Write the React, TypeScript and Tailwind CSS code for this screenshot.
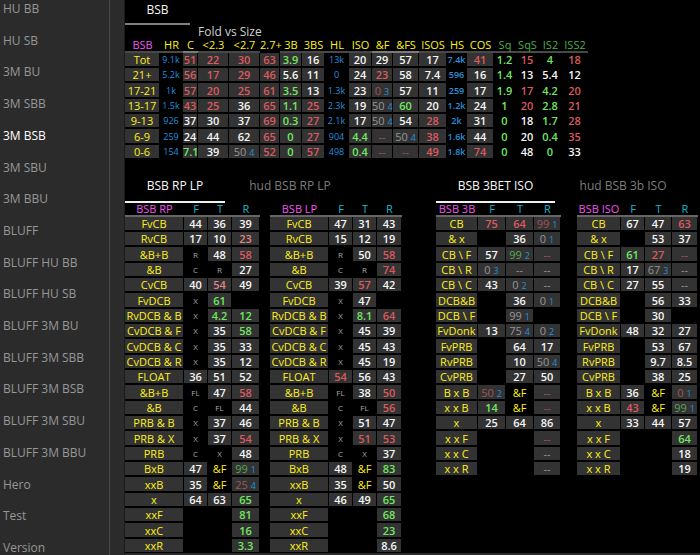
import { clsx } from 'clsx';

const pages = [
  'HU BB', 'HU SB', '3M BU', '3M SBB', '3M BSB', '3M SBU', '3M BBU', 'BLUFF', 'BLUFF HU BB',
  'BLUFF HU SB', 'BLUFF 3M BU', 'BLUFF 3M SBB', 'BLUFF 3M BSB', 'BLUFF 3M SBU', 'BLUFF 3M BBU',
  'Hero', 'Test', 'Version',
];

// Cell notation: optional tone letter, value, optional "/sample size". "_" is an empty cell.
const tones: Record<string, string> = {
  r: 'text-[#dc5a5e]',
  p: 'text-[#e08486]',
  g: 'text-[#72e862]',
  d: 'text-[#969696] font-normal',
  e: 'text-[#a05658] font-normal',
  h: 'text-[#58a854] font-normal',
};

type Column = {
  name: string;
  width: string;
  head?: string;
  line?: string;
  kind?: 'hands' | 'total' | 'bare';
};

const sizeColumns: Column[] = [
  { name: 'BSB', width: 'w-[35px]', head: 'text-[#f255f2]' },
  { name: 'HR', width: 'w-[23px]', kind: 'hands' },
  { name: 'C', width: 'w-[15px]', line: 'border-b-[#7a7a7a]' },
  { name: '<2.3', width: 'w-[31px]' },
  { name: '<2.7', width: 'w-[31px]' },
  { name: '2.7+', width: 'w-[20px]', line: 'border-b-black' },
  { name: '3B', width: 'w-[22px]' },
  { name: '3BS', width: 'w-[23px]' },
  { name: 'HL', width: 'w-[24px]', kind: 'hands' },
  { name: 'ISO', width: 'w-[23px]' },
  { name: '&F', width: 'w-[21px]', line: 'border-b-[#7a7a7a]' },
  { name: '&FS', width: 'w-[26px]', line: 'border-b-[#7a7a7a]' },
  { name: 'ISOS', width: 'w-[28px]' },
  { name: 'HS', width: 'w-[20px]', kind: 'total' },
  { name: 'COS', width: 'w-[27px]' },
  { name: 'Sq', width: 'w-[22px]', head: 'text-[#48b048]', kind: 'bare' },
  { name: 'SqS', width: 'w-[23px]', head: 'text-[#48b048]', kind: 'bare' },
  { name: 'IS2', width: 'w-[23px]', head: 'text-[#48b048]', kind: 'bare' },
  { name: 'ISS2', width: 'w-[26px]', head: 'text-[#48b048]', kind: 'bare' },
];

const sizeRows = [
  'Tot|9.1k r51 r22 r30 r63 g3.9 16 13k 20 29 57 17 7.4k r41 g1.2 r15 g4 r18',
  '21+|5.2k r56 r17 r29 r46 5.6 11 0 24 r23 58 7.4 596 16 g1.4 13 5.4 12',
  '17-21|1k r57 r20 r25 r61 g3.5 13 1.3k 23 e0/3 57 11 259 17 g1.9 r17 g4.2 r20',
  '13-17|1.5k r43 r25 36 r65 g1.1 r25 2.3k 19 d50/4 g60 20 1.2k 24 g1 r20 g2.8 r21',
  '9-13|926 37 30 37 r69 g0.3 r27 2.1k 17 d50/4 54 r28 2k 31 g0 18 g1.7 r28',
  '6-9|259 24 44 62 r65 g0 r27 904 g4.4 e-- d50/4 r38 1.6k 44 g0 20 g0.4 r35',
  '0-6|154 g7.1 39 d50/4 r52 g0 r57 498 g0.4 e-- e-- r49 1.8k r74 g0 48 g0 33',
];

const streets = (name: string, label: string, f: string, t: string, r: string): Column[] => [
  { name, width: label, head: 'text-[#f255f2]', line: 'border-b-[#666666]' },
  { name: 'F', width: f, head: 'text-[#18b8d0]', line: 'border-b-[#666666]' },
  { name: 'T', width: t, head: 'text-[#18b8d0]', line: 'border-b-[#666666]' },
  { name: 'R', width: r, head: 'text-[#18b8d0]', line: 'border-b-[#666666]' },
];

const rpRows = [
  'FvCB|44 36 39', 'RvCB|17 10 p23', '&B+B|R 48 r58', '&B|C R 27', 'CvCB|40 p54 49',
  'FvDCB|X g61 _', 'RvDCB & B|X g4.2 g12', 'CvDCB & F|X 35 g58', 'CvDCB & C|X 35 33',
  'CvDCB & R|X 35 12', 'FLOAT|36 51 52', '&B+B|FL 47 r58', '&B|C FL 44', 'PRB & B|X 37 46',
  'PRB & X|X 37 r54', 'PRB|C X 48', 'BxB|47 &F h99/1', 'xxB|35 &F e25/4', 'x|64 63 g65',
  'xxF|_ _ g81', 'xxC|_ _ g16', 'xxR|_ _ g3.3',
];

const lpRows = [
  'FvCB|47 31 43', 'RvCB|15 12 19', '&B+B|R 50 r58', '&B|C R r74', 'CvCB|39 r57 42',
  'FvDCB|X 47 _', 'RvDCB & B|X g8.1 r64', 'CvDCB & F|X 45 39', 'CvDCB & C|X 45 43',
  'CvDCB & R|X 45 19', 'FLOAT|r54 56 43', '&B+B|FL 38 r50', '&B|C FL r56', 'PRB & B|X 51 47',
  'PRB & X|X r51 r53', 'PRB|C X 37', 'BxB|48 &F g83', 'xxB|35 &F 50', 'x|46 49 g65',
  'xxF|_ _ g68', 'xxC|_ _ g23', 'xxR|_ _ 8.6',
];

const threeBetRows = [
  'CB|r75 r64 e99/1', '& x|_ 36 d0/1', 'CB \\ F|57 h99/2 e--', 'CB \\ R|d0/3 d-- d--',
  'CB \\ C|43 d0/2 d--', 'DCB&B|_ 36 d0/1', 'DCB \\ F|_ d99/1 _', 'FvDonk|13 d75/4 d0/2',
  'FvPRB|_ 64 17', 'RvPRB|_ 10 d50/4', 'CvPRB|_ 27 50', 'B x B|e50/2 &F e--', 'x x B|g14 &F e--',
  'x|25 64 86', 'x x F|_ _ e--', 'x x C|_ _ d--', 'x x R|_ _ d--',
];

const isoRows = [
  'CB|67 47 r63', '& x|_ 53 37', 'CB \\ F|g61 r27 e--', 'CB \\ R|17 d67/3 d--',
  'CB \\ C|27 55 d--', 'DCB&B|_ 56 33', 'DCB \\ F|_ 30 _', 'FvDonk|48 32 27',
  'FvPRB|_ 53 67', 'RvPRB|_ 9.7 8.5', 'CvPRB|_ 38 25', 'B x B|36 &F e0/1', 'x x B|r43 &F h99/1',
  'x|33 44 57', 'x x F|_ _ g64', 'x x C|_ _ 18', 'x x R|_ _ 19',
];

const cellBase = 'border-r border-b-2 border-black p-0 text-center leading-[13px]';

function StatCell({ code, kind }: { code: string; kind?: Column['kind'] }) {
  if (code === '_') return <td className={cellBase} />;
  if (code === '&F') return <td className={clsx(cellBase, 'font-medium text-[#fff01c]')}>&amp;F</td>;
  if (/^[A-Z]+$/.test(code)) {
    return <td className={clsx(cellBase, 'text-[8px] font-normal text-[#a8a8a8]')}>{code}</td>;
  }
  if (kind === 'hands') {
    return <td className={clsx(cellBase, 'text-[9px] font-normal text-[#2390dc]')}>{code}</td>;
  }
  if (kind === 'total') {
    return <td className={clsx(cellBase, 'text-[9px] text-[#2a92dc]')}>{code}</td>;
  }
  const tone = tones[code[0]];
  const [value, sample] = (tone ? code.slice(1) : code).split('/');
  return (
    <td className={clsx(cellBase, kind !== 'bare' && 'bg-[#333333]', tone ?? 'text-[#f6f6f6]')}>
      {value}
      {sample && <span className="ml-[3px] text-[9px] leading-none text-[#2390dc]">{sample}</span>}
    </td>
  );
}

function StatTable({ columns, rows, caption }: { columns: Column[]; rows: string[]; caption?: string }) {
  return (
    <table className="w-px table-fixed border-separate border-spacing-0 self-start text-[11px] font-semibold whitespace-nowrap">
      <colgroup>
        {columns.map((c) => (
          <col key={c.name} className={c.width} />
        ))}
      </colgroup>
      <thead>
        {caption && (
          <tr className="h-[13px]">
            <td colSpan={3} className="p-0" />
            <th colSpan={3} className="p-0 text-left text-[12px] leading-[13px] font-normal text-[#d0d0d0]">
              {caption}
            </th>
            <td colSpan={columns.length - 6} className="p-0" />
          </tr>
        )}
        <tr>
          {columns.map((c) => (
            <th
              key={c.name}
              scope="col"
              className={clsx(
                'border-b-2 p-0 text-center font-medium',
                caption ? 'leading-[13px]' : 'leading-[12px]',
                c.head ?? 'text-[#fff01c]',
                c.line ?? 'border-b-[#484848]',
              )}
            >
              {c.name}
            </th>
          ))}
        </tr>
      </thead>
      <tbody>
        {rows.map((row) => {
          const [label, cells] = row.split('|');
          return (
            <tr key={row} className="h-[15px] nth-[3n]:h-[16px]">
              <th scope="row" className={clsx(cellBase, 'bg-[#333333] font-medium text-[#fff01c]')}>
                {label}
              </th>
              {cells.split(' ').map((code, i) => (
                <StatCell key={i} code={code} kind={columns[i + 1].kind} />
              ))}
            </tr>
          );
        })}
      </tbody>
    </table>
  );
}

function Tab({ label, active, className }: { label: string; active?: boolean; className: string }) {
  return (
    <button
      type="button"
      className={clsx(
        'h-[33px] border-b-2 text-center text-[12px] whitespace-nowrap',
        active ? 'border-[#f0f0f0] text-[#f8f8f8]' : 'border-transparent text-[#7c7c7c]',
        className,
      )}
    >
      {label}
    </button>
  );
}

export default function App() {
  return (
    <div className="flex h-screen overflow-hidden bg-black font-['Open_Sans','Noto_Sans',sans-serif]">
      <aside className="flex w-[125px] shrink-0 border-r border-[#1c1c1c] bg-[#2b2b2b]">
        <nav className="-mb-px flex w-[110px] flex-col justify-between border-r border-[#484848] pt-px">
          {pages.map((page) => (
            <button
              key={page}
              type="button"
              className={clsx(
                'pl-[3px] text-left text-[12px] leading-[16px] whitespace-nowrap',
                page === '3M BSB' ? 'font-medium text-white' : 'text-[#979797]',
              )}
            >
              {page}
            </button>
          ))}
        </nav>
      </aside>

      <main className="min-w-0 flex-1 overflow-hidden border-b-2 border-[#2b2b2b]">
        <section>
          <button
            type="button"
            className="block h-[25px] w-[65px] border-b-2 border-[#808080] pb-1 text-center text-[12px] text-[#f8f8f8]"
          >
            BSB
          </button>
          <StatTable columns={sizeColumns} rows={sizeRows} caption="Fold vs Size" />
        </section>

        <div className="mt-[10px] flex gap-[34px]">
          <section>
            <div className="flex">
              <Tab label="BSB RP LP" active className="w-[100px]" />
              <Tab label="hud BSB RP LP" className="w-[130px]" />
            </div>
            <div className="flex gap-[10px]">
              <StatTable
                columns={streets('BSB RP', 'w-[59px]', 'w-[24px]', 'w-[24px]', 'w-[28px]')}
                rows={rpRows}
              />
              <StatTable
                columns={streets('BSB LP', 'w-[59px]', 'w-[24px]', 'w-[24px]', 'w-[25px]')}
                rows={lpRows}
              />
            </div>
          </section>

          <section>
            <div className="flex">
              <Tab label="BSB 3BET ISO" active className="w-[119px]" />
              <Tab label="hud BSB 3b ISO" className="w-[136px]" />
            </div>
            <div className="flex gap-[16px]">
              <StatTable
                columns={streets('BSB 3B', 'w-[42px]', 'w-[28px]', 'w-[28px]', 'w-[27px]')}
                rows={threeBetRows}
              />
              <StatTable
                columns={streets('BSB ISO', 'w-[44px]', 'w-[24px]', 'w-[27px]', 'w-[26px]')}
                rows={isoRows}
              />
            </div>
          </section>
        </div>
      </main>
    </div>
  );
}
